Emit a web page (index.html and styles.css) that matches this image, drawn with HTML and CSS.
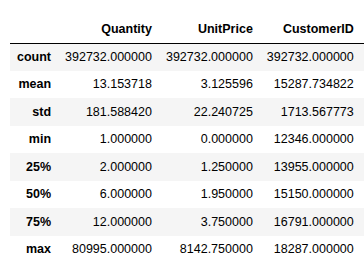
FILE: index.html
```html
<!DOCTYPE html>
<html>
<head>
<meta charset="utf-8">
<link rel="stylesheet" href="styles.css">
</head>
<body>
<div class="output">
<table class="dataframe">
  <thead>
    <tr><th></th><th>Quantity</th><th>UnitPrice</th><th>CustomerID</th></tr>
  </thead>
  <tbody>
    <tr><th>count</th><td>392732.000000</td><td>392732.000000</td><td>392732.000000</td></tr>
    <tr><th>mean</th><td>13.153718</td><td>3.125596</td><td>15287.734822</td></tr>
    <tr><th>std</th><td>181.588420</td><td>22.240725</td><td>1713.567773</td></tr>
    <tr><th>min</th><td>1.000000</td><td>0.000000</td><td>12346.000000</td></tr>
    <tr><th>25%</th><td>2.000000</td><td>1.250000</td><td>13955.000000</td></tr>
    <tr><th>50%</th><td>6.000000</td><td>1.950000</td><td>15150.000000</td></tr>
    <tr><th>75%</th><td>12.000000</td><td>3.750000</td><td>16791.000000</td></tr>
    <tr><th>max</th><td>80995.000000</td><td>8142.750000</td><td>18287.000000</td></tr>
  </tbody>
</table>
</div>
</body>
</html>
```
FILE: styles.css
```css
html, body {
  margin: 0;
  padding: 0;
  background: #ffffff;
  overflow: hidden;
}
.output {
  padding: 16px 0 0 10px;
}
.dataframe {
  border-collapse: collapse;
  border-spacing: 0;
  font-family: "Liberation Sans", Arial, sans-serif;
  font-size: 12.5px;
  color: #000000;
  white-space: nowrap;
}
.dataframe th,
.dataframe td {
  padding: 0 7px;
  text-align: right;
  vertical-align: middle;
  line-height: 1;
}
.dataframe th {
  font-weight: bold;
}
.dataframe thead tr {
  height: 27px;
}
.dataframe thead th {
  border-bottom: 1px solid #000000;
}
.dataframe tbody tr {
  height: 27.5px;
}
.dataframe tbody tr:nth-child(odd) {
  background: #f5f5f5;
}
.dataframe tr > :last-child {
  padding-right: 14px;
}
```
